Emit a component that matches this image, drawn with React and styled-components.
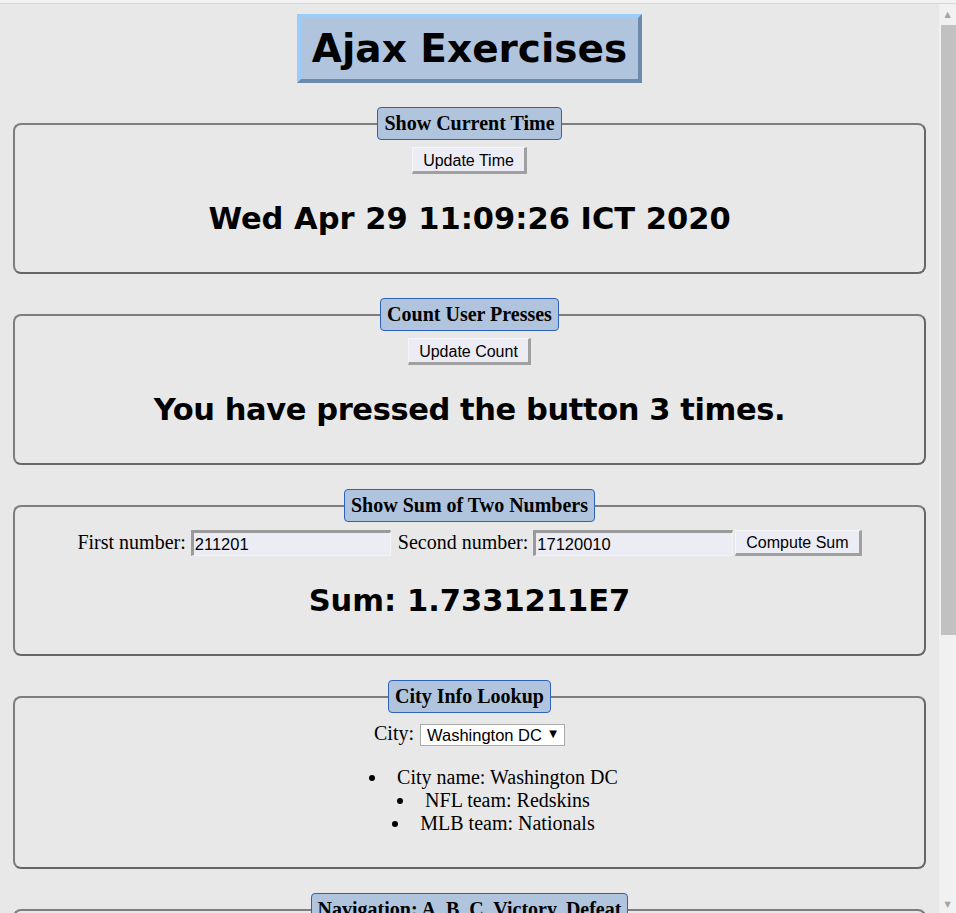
import styled, { createGlobalStyle } from "styled-components";

const GlobalStyle = createGlobalStyle`
  html, body {
    margin: 0;
    padding: 0;
    height: 100%;
    overflow: hidden;
    background: #e8e8e8;
    font-family: "Liberation Serif", "Times New Roman", serif;
    color: #000;
  }
`;

const Frame = styled.div`
  height: 100vh;
  display: flex;
  flex-direction: column;
`;

const TopEdge = styled.div`
  height: 3px;
  background: #f2f2f2;
  border-bottom: 1px solid #d6d6d6;
`;

const Window = styled.div`
  flex: 1;
  min-height: 0;
  display: flex;
`;

const Viewport = styled.div`
  flex: 1;
  overflow: hidden;
  padding: 0 8px;
`;

const Scrollbar = styled.div`
  width: 17px;
  background: #f1f1f1;
  display: flex;
  flex-direction: column;
`;

const ScrollArrow = styled.div`
  height: ${(props) => (props.h ? props.h : "17px")};
  display: flex;
  align-items: center;
  justify-content: center;
  font: 8px/1 "DejaVu Sans", sans-serif;
  color: #a3a3a3;
`;

const Track = styled.div`
  flex: 1;
  padding-left: 2px;
`;

const Thumb = styled.div`
  height: 610px;
  background: #c1c1c1;
`;

const Masthead = styled.div`
  text-align: center;
  margin: 10px 0 24px;
`;

const Title = styled.h1`
  display: inline-block;
  margin: 0;
  padding: 8px 11px 7px;
  background: #b0c4de;
  border: 4px solid;
  border-color: #9ccdfa #6a8bab #6a8bab #9ccdfa;
  font: bold 39px/46px "DejaVu Sans", Verdana, sans-serif;
`;

const Panel = styled.fieldset`
  margin: 0 5px 24px;
  padding: 7px 10px 10px;
  border: 2px solid;
  border-color: #7e7e7e #666 #666 #7e7e7e;
  border-radius: 8px;
  text-align: center;
  min-width: 0;
`;

const PanelTitle = styled.legend`
  margin: 0 auto;
  padding: 4px 6px;
  background: #b0c4de;
  border: 1px solid #2d62b8;
  border-radius: 4px;
  font: bold 20px/23px "Liberation Serif", "Times New Roman", serif;
`;

const FormRow = styled.div`
  display: flex;
  justify-content: center;
  align-items: center;
  min-height: 27px;
  font-size: 20px;
  line-height: 23px;
`;

const PushButton = styled.button`
  height: ${(props) => (props.h ? props.h : "27px")};
  font: 16px/19px "Liberation Sans", Arial, sans-serif;
  color: #000;
  background: #ececf4;
  padding: 2px 10px 1px;
  margin: 0;
  border-style: solid;
  border-width: 1px 3px 3px 1px;
  border-color: #f6f6fa #a0a0a0 #a0a0a0 #f6f6fa;
  border-radius: 0;
  cursor: pointer;
`;

const Readout = styled.h2`
  margin: 27px 0 25px;
  font: bold 30.5px/36px "DejaVu Sans", Verdana, sans-serif;
  letter-spacing: ${(props) => (props.spacing ? props.spacing : "normal")};
`;

const Label = styled.label`
  margin-right: ${(props) => (props.gap ? props.gap : "5px")};
`;

const NumberField = styled.input`
  box-sizing: border-box;
  width: 200px;
  height: 26px;
  margin: 0 ${(props) => (props.after ? props.after : "0")} 0 0;
  padding: 1px 1px 0;
  background: #ececf4;
  border-style: solid;
  border-width: 3px 1px 1px 3px;
  border-color: #9a9a9a #f4f4f8 #f4f4f8 #9a9a9a;
  font: 16.5px "Liberation Sans", Arial, sans-serif;
  color: #000;
  outline: none;
`;

const SelectWrap = styled.span`
  position: relative;
  display: inline-block;
  height: 22px;
`;

const CitySelect = styled.select`
  appearance: none;
  box-sizing: border-box;
  width: 145px;
  height: 22px;
  margin: 0;
  padding: 0 20px 0 6px;
  background: #fff;
  border: 1px solid #a9a9a9;
  border-radius: 0;
  font: 16.5px "Liberation Sans", Arial, sans-serif;
  color: #000;
`;

const Caret = styled.span`
  position: absolute;
  right: 8px;
  top: 6px;
  font: 10px/1 "DejaVu Sans", sans-serif;
  pointer-events: none;
`;

const InfoList = styled.ul`
  margin: 19px 0 22px;
  padding: 0 0 0 48px;
  list-style: none;
`;

const InfoItem = styled.li`
  font-size: 20px;
  line-height: 23px;

  &::before {
    content: "";
    display: inline-block;
    width: 6px;
    height: 6px;
    margin: 0 22px 3px 0;
    border-radius: 50%;
    background: #000;
    vertical-align: middle;
  }
`;

const NavLinks = styled.p`
  margin: 0;
  font-size: 20px;
  line-height: 23px;
`;

export default function App() {
  return (
    <>
      <GlobalStyle />
      <Frame>
        <TopEdge />
        <Window>
          <Viewport>
            <Masthead>
              <Title>Ajax Exercises</Title>
            </Masthead>

            <Panel>
              <PanelTitle>Show Current Time</PanelTitle>
              <FormRow>
                <PushButton type="button">Update Time</PushButton>
              </FormRow>
              <Readout>Wed Apr 29 11:09:26 ICT 2020</Readout>
            </Panel>

            <Panel>
              <PanelTitle>Count User Presses</PanelTitle>
              <FormRow>
                <PushButton type="button">Update Count</PushButton>
              </FormRow>
              <Readout spacing="-0.4px">You have pressed the button 3 times.</Readout>
            </Panel>

            <Panel>
              <PanelTitle>Show Sum of Two Numbers</PanelTitle>
              <FormRow>
                <Label>First number:</Label>
                <NumberField defaultValue="211201" after="7px" />
                <Label>Second number:</Label>
                <NumberField defaultValue="17120010" after="2px" />
                <PushButton type="button" h="26px">Compute Sum</PushButton>
              </FormRow>
              <Readout>Sum: 1.7331211E7</Readout>
            </Panel>

            <Panel>
              <PanelTitle>City Info Lookup</PanelTitle>
              <FormRow>
                <Label gap="6px">City:</Label>
                <SelectWrap>
                  <CitySelect defaultValue="Washington DC">
                    <option>Washington DC</option>
                    <option>New York</option>
                    <option>Boston</option>
                  </CitySelect>
                  <Caret>▼</Caret>
                </SelectWrap>
              </FormRow>
              <InfoList>
                <InfoItem>City name: Washington DC</InfoItem>
                <InfoItem>NFL team: Redskins</InfoItem>
                <InfoItem>MLB team: Nationals</InfoItem>
              </InfoList>
            </Panel>

            <Panel>
              <PanelTitle>Navigation: A, B, C, Victory, Defeat</PanelTitle>
              <NavLinks>Go to page A | Go to page B | Go to page C</NavLinks>
            </Panel>
          </Viewport>
          <Scrollbar>
            <ScrollArrow h="21px">▲</ScrollArrow>
            <Track>
              <Thumb />
            </Track>
            <ScrollArrow>▼</ScrollArrow>
          </Scrollbar>
        </Window>
      </Frame>
    </>
  );
}
